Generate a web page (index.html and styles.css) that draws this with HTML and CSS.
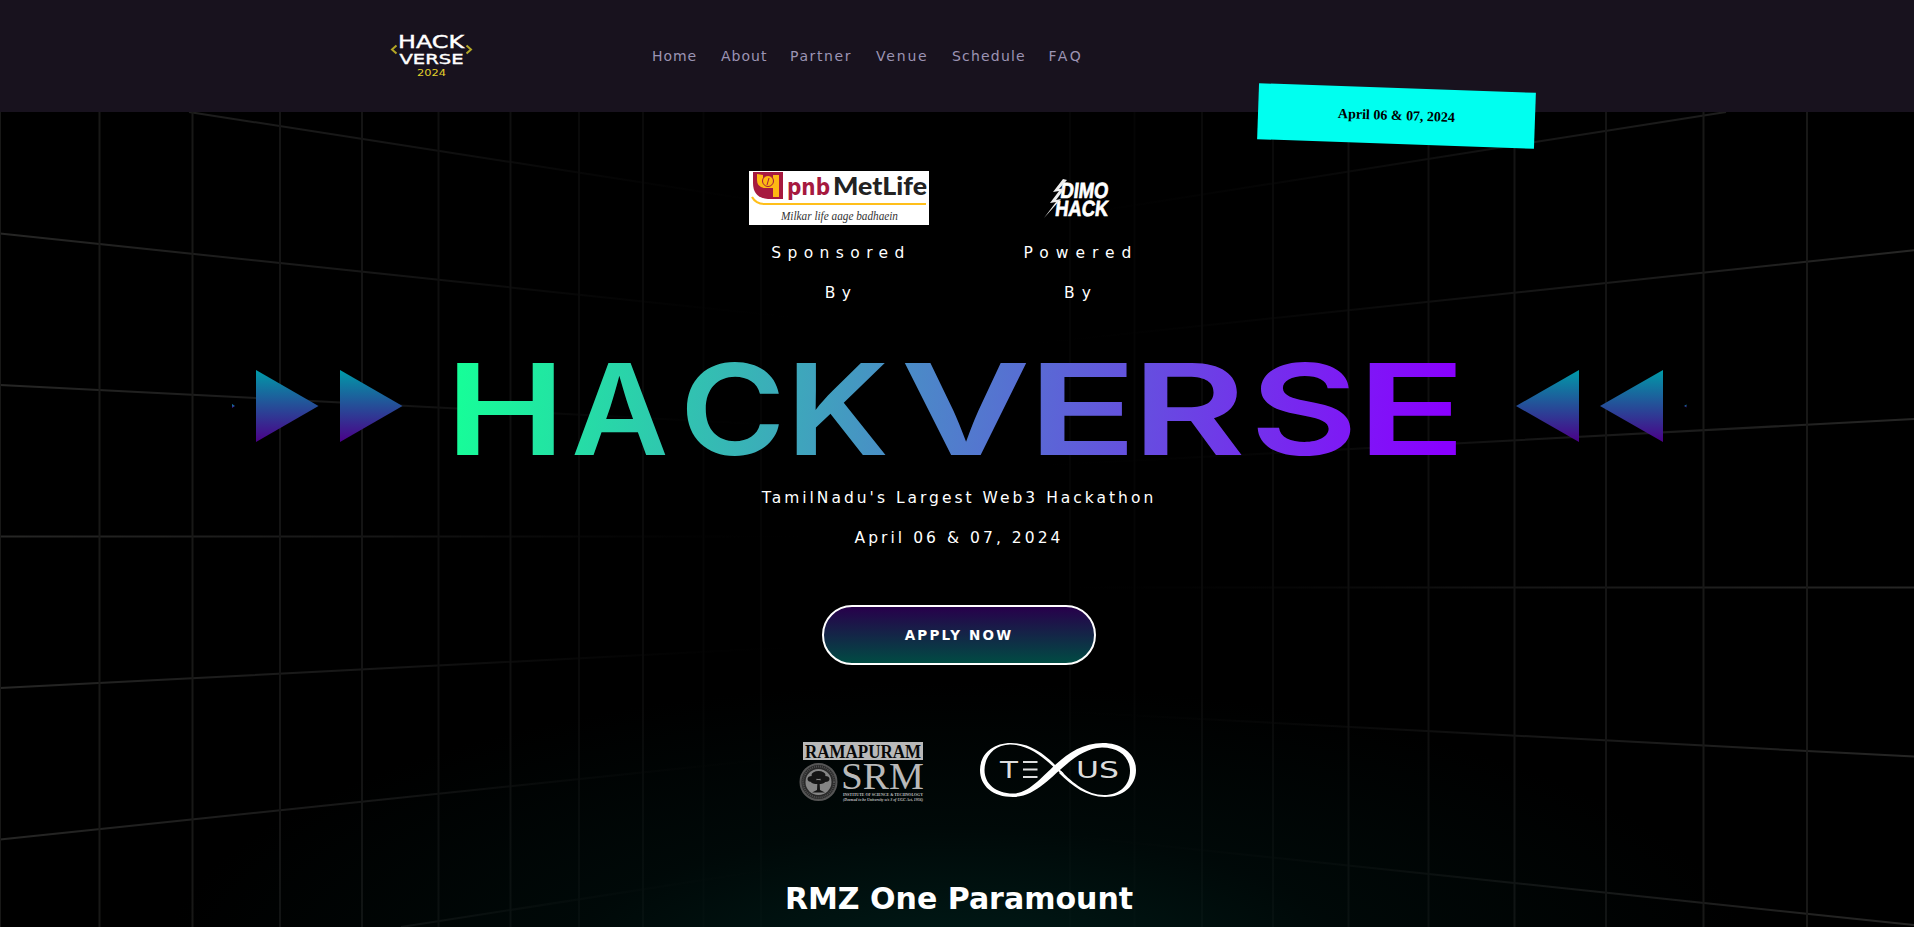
FILE: index.html
```html
<!DOCTYPE html>
<html lang="en">
<head>
<meta charset="utf-8">
<title>Hackverse 2024</title>
<link rel="stylesheet" href="styles.css">
</head>
<body>
<header class="header">
  <svg class="brand" width="84" height="48" viewBox="0 0 84 48" aria-label="Hackverse 2024">
    <g class="brand-word">
      <text x="8" y="15" font-size="17" textLength="66" lengthAdjust="spacingAndGlyphs">HACK</text>
      <text x="9.500" y="31" font-size="14" textLength="64" lengthAdjust="spacingAndGlyphs">VERSE</text>
    </g>
    <text class="brand-year" x="27" y="43" font-size="8" textLength="29" lengthAdjust="spacingAndGlyphs">2024</text>
    <path class="brand-mark" d="M6.500 12.500L2 16.500L6.500 20.500M76.500 12.500L81 16.500L76.500 20.500"/>
  </svg>
  <nav class="nav">
    <a class="n1">Home</a><a class="n2">About</a><a class="n3">Partner</a><a class="n4">Venue</a><a class="n5">Schedule</a><a class="n6">FAQ</a>
  </nav>
  <div class="date-tag">April 06 &amp; 07, 2024</div>
</header>

<main class="hero">
  <svg class="grid-lines" width="1914" height="815" viewBox="0 112 1914 815">
    <defs>
      <linearGradient id="fade" gradientUnits="userSpaceOnUse" x1="0" y1="0" x2="1914" y2="0">
        <stop offset="0" stop-color="#262625"/><stop offset=".2" stop-color="#161616"/><stop offset=".43" stop-color="#000" stop-opacity="0"/>
        <stop offset=".53" stop-color="#000" stop-opacity="0"/><stop offset=".8" stop-color="#161616"/><stop offset="1" stop-color="#262625"/>
      </linearGradient>
    </defs>
    <g fill="none" stroke="url(#fade)" stroke-width="2">
      <path d="M189 112L800 207M0 233.500L800 318M0 385L800 426M0 536.500L800 536.600M0 688L800 647M0 839.500L800 756M401 927L800 865"/>
      <path d="M1726 112L1060 217M1914 250.300L1030 344M1914 419L1030 466M1914 587.400L1030 587.500M1914 756.600L1030 710M1914 925L1030 832"/>
    </g>
    <g class="verticals">
      <path stroke="#181817" d="M0 112V927M99.500 112V927M192.500 112V927M1703.500 112V927M1807 112V927"/>
      <path stroke="#141414" d="M280 112V927M362 112V927M1514.500 112V927M1606 112V927"/>
      <path stroke="#0f0f0f" d="M438.500 112V927M510.500 112V927M1348.500 112V927M1428.500 112V927"/>
      <path stroke="#0a0a0a" d="M579 112V927M643 112V927M1202 112V927M1273 112V927"/>
      <path stroke="#050505" d="M703.500 112V927M761 112V927M1070 112V927M1134.500 112V927"/>
    </g>
  </svg>
  <div class="glow"></div>

  <div class="content">
    <section class="backers">
      <div class="backer">
        <svg width="180" height="54" viewBox="0 0 180 54">
          <rect width="180" height="54" fill="#fff"/>
          <path d="M4 1H34V28H19Q4 27 4 12Z" fill="#a6193f"/>
          <path d="M8 3V9Q8 17 17 17H24V26H30V4H24V12H14V4Z" fill="#fdb913"/>
          <circle cx="19" cy="10" r="5.500" fill="#fdb913" stroke="#a6193f"/>
          <path d="M18 14L20 7" stroke="#a6193f"/>
          <text class="pnb" x="38" y="24" textLength="43" lengthAdjust="spacingAndGlyphs">pnb</text>
          <text class="metlife" x="84" y="24" textLength="94" lengthAdjust="spacingAndGlyphs">MetLife</text>
          <path d="M3 26Q7 33 16 33H177" fill="none" stroke="#ffbf1a" stroke-width="2.200"/>
          <text class="script" x="32" y="49" textLength="117" lengthAdjust="spacingAndGlyphs">Milkar life aage badhaein</text>
        </svg>
        <p class="role">Sponsored<br>By</p>
      </div>
      <div class="backer">
        <svg width="180" height="54" viewBox="0 0 180 54">
          <g transform="translate(10 0)">
            <g class="dimo" transform="skewX(-7)">
              <text x="64" y="27" textLength="48" lengthAdjust="spacingAndGlyphs">DIMO</text>
              <text x="61" y="45" textLength="53" lengthAdjust="spacingAndGlyphs">HACK</text>
            </g>
            <path d="M64 8L54 21L60 20L51 32L57 31L45 47L62 28L57 29L66 17L60 18L68 9Z" fill="#eee"/>
          </g>
        </svg>
        <p class="role powered">Powered<br>By</p>
      </div>
    </section>

    <svg class="title" width="1480" height="110" viewBox="220 351 1480 110" role="heading">
      <defs>
        <linearGradient id="word" gradientUnits="userSpaceOnUse" x1="458" y1="345" x2="1440" y2="475">
          <stop offset="0" stop-color="#16ff98"/><stop offset="1" stop-color="#8900ff"/>
        </linearGradient>
        <linearGradient id="arrow" x1="0" y1="0" x2="0" y2="1">
          <stop offset="0" stop-color="#009ba8"/><stop offset="1" stop-color="#4b0088"/>
        </linearGradient>
      </defs>
      <g fill="url(#arrow)">
        <path d="M256 370L318.500 406L256 442Z"/><path d="M340 370L402.500 406L340 442Z"/><path d="M232 404L235 406L232 408Z"/>
        <path d="M1579 370L1516 406L1579 442Z"/><path d="M1663 370L1600 406L1663 442Z"/><path d="M1686.500 404.500L1684 406L1686.500 407.500Z"/>
      </g>
      <g class="word" fill="url(#word)">
        <text y="455"><tspan x="445.400" textLength="120" lengthAdjust="spacingAndGlyphs">H</tspan><tspan x="571.300" textLength="97.300" lengthAdjust="spacingAndGlyphs">A</tspan><tspan x="679.800" textLength="105.800" lengthAdjust="spacingAndGlyphs">C</tspan><tspan x="786" textLength="103.300" lengthAdjust="spacingAndGlyphs">K</tspan><tspan x="900.400" textLength="130" lengthAdjust="spacingAndGlyphs">V</tspan><tspan x="1027.500" textLength="109.800" lengthAdjust="spacingAndGlyphs">E</tspan><tspan x="1131.800" textLength="114" lengthAdjust="spacingAndGlyphs">R</tspan><tspan x="1250" textLength="108" lengthAdjust="spacingAndGlyphs">S</tspan><tspan x="1356.500" textLength="109.800" lengthAdjust="spacingAndGlyphs">E</tspan></text>
      </g>
    </svg>

    <p class="tagline"><span class="t1">TamilNadu's Largest Web3 Hackathon</span><br><span class="t2">April 06 &amp; 07, 2024</span></p>
    <button class="apply">APPLY NOW</button>

    <section class="hosts">
      <svg width="126" height="62" viewBox="798 742 126 62">
        <rect x="803" y="743" width="120" height="18" fill="#b9b9b9"/>
        <text class="rama" x="805" y="758.500" textLength="116" lengthAdjust="spacingAndGlyphs">RAMAPURAM</text>
        <text class="srm" x="841" y="789.500" textLength="83" lengthAdjust="spacingAndGlyphs">SRM</text>
        <text class="tiny" x="843" y="796.500" font-size="4.500" font-weight="700" textLength="80" lengthAdjust="spacingAndGlyphs">INSTITUTE OF SCIENCE &amp; TECHNOLOGY</text>
        <text class="tiny" x="843" y="801.800" font-size="4" font-weight="700" font-style="italic" textLength="80" lengthAdjust="spacingAndGlyphs">(Deemed to be University u/s 3 of UGC Act, 1956)</text>
        <circle cx="818.500" cy="783" r="18" fill="#292929" stroke="#555" stroke-width="2"/>
        <circle cx="818.500" cy="783" r="15.500" fill="none" stroke="#505050" stroke-width="2" stroke-dasharray="1 1"/>
        <circle cx="818.500" cy="783" r="13" fill="#858585"/>
        <g fill="#151515"><ellipse cx="818.500" cy="776" rx="7" ry="4"/><ellipse cx="812" cy="780" rx="4.500" ry="3"/><ellipse cx="825" cy="780" rx="4.500" ry="3"/><ellipse cx="818" cy="783" rx="7" ry="2"/><path d="M817.500 782H819.500L820 791L825 793.500H812L817 791Z"/></g>
      </svg>
      <svg width="160" height="62" viewBox="978 742 160 62">
        <path fill="#fff" d="M1058 769C1045 755 1030 744 1011 744C992 744 980 756 980 771C980 787 993 798 1013 798C1047 798 1066 750 1102 748.500C1119 748.500 1130 758 1130 772C1130 786 1120 796 1104 796C1087 796 1073 784 1061 772L1059 774C1072 787 1087 798 1105 798C1123 798 1136 787 1136 771C1136 755 1122 744 1103 744C1058 744 1041 794.500 1013 794.500C996 794.500 984.500 785 984.500 771C984.500 757 995 745.500 1010 745.500C1028 745.500 1042 757 1057 771Z"/>
        <path d="M1054 767L1063 775" stroke="#fff" stroke-width="2"/>
        <g class="texus"><text x="1000" y="779" textLength="18" lengthAdjust="spacingAndGlyphs">T</text><text x="1076" y="779" textLength="43" lengthAdjust="spacingAndGlyphs">US</text></g>
        <path d="M1023 763H1037.500M1023 770.500H1037.500M1023 778H1037.500" stroke="#ddd" stroke-width="2"/>
      </svg>
    </section>

    <h2 class="venue">RMZ One Paramount</h2>
  </div>
</main>
</body>
</html>
```

FILE: styles.css
```css
* { box-sizing: border-box; }
body {
  margin: 0;
  height: 927px;
  overflow: hidden;
  background: #000;
  color: #fff;
  font-family: "DejaVu Sans", sans-serif;
}
.header {
  position: relative;
  z-index: 2;
  display: flex;
  height: 112px;
  padding: 33px 0 0 390px;
  background: #18121e;
}
.brand { flex: none; overflow: visible; }
.brand-word { fill: #fff; font-family: "DejaVu Sans", sans-serif; font-weight: 400; stroke: #fff; stroke-width: .4px; }
.brand-year { fill: #e0cf2c; font-family: "DejaVu Sans", sans-serif; font-weight: 400; }
.brand-mark { fill: none; stroke: #b3a626; stroke-width: 2; }
.nav {
  display: grid;
  grid-template-columns: 69px 69px 86px 76px 96.5px 40px;
  margin: 13px 0 0 178px;
  height: 20px;
  line-height: 20px;
  font-size: 14px;
  color: #9c94b4;
}
.n1 { letter-spacing: .9px; }
.n2 { letter-spacing: 1px; }
.n3 { letter-spacing: 1.6px; }
.n4 { letter-spacing: 1.8px; }
.n5 { letter-spacing: 1.2px; }
.n6 { letter-spacing: 2.6px; }
.date-tag {
  position: absolute;
  left: 1258px;
  top: 88px;
  width: 277px;
  height: 56px;
  background: #00fff0;
  color: #000;
  font: 700 14px/56px "Liberation Serif", serif;
  text-align: center;
  transform: rotate(2deg);
}
.hero { position: relative; height: 815px; overflow: hidden; }
.grid-lines, .glow { position: absolute; left: 0; top: 0; }
.verticals { fill: none; stroke-width: 2; }
.glow {
  width: 100%;
  height: 100%;
  background: radial-gradient(ellipse 800px 290px at 957px 860px, rgba(0, 36, 32, .8), rgba(0, 22, 20, .4) 50%, transparent);
}
.content {
  position: relative;
  display: flex;
  flex-direction: column;
  align-items: center;
  padding-top: 59px;
}
.backers { display: flex; gap: 60px; height: 180px; margin-left: 4px; }
.backer { width: 180px; text-align: center; }
.backer svg { display: block; }
.role { margin: 8px -20px 0 -16px; font-size: 15.500px; line-height: 40px; letter-spacing: 6.400px; }
.powered { letter-spacing: 7px; }
.title { display: block; margin-left: 6px; overflow: visible; }
.pnb { fill: #a6193f; font: 700 23px "DejaVu Sans", sans-serif; }
.metlife { fill: #222; font: 900 24px Lato, sans-serif; }
.script { fill: #333; font: italic 12px "Liberation Serif", serif; }
.dimo { fill: #fff; font: 700 22px "Liberation Sans", sans-serif; stroke: #fff; stroke-width: .7px; }
.word { font: 600 126.500px Inter, sans-serif; }
.tagline { margin: 17px 0 0 4px; font-size: 15.500px; line-height: 40px; text-align: center; white-space: nowrap; }
.t1 { letter-spacing: 3px; }
.t2 { letter-spacing: 3.050px; }
.apply {
  width: 274px;
  height: 60px;
  margin: 47px 0 0 4px;
  border: 2px solid #fff;
  border-radius: 30px;
  background: linear-gradient(#27004b, #004b43);
  color: #fff;
  font: 700 13.500px "DejaVu Sans", sans-serif;
  letter-spacing: 2.200px;
}
.hosts { display: flex; gap: 54px; height: 62px; margin: 76px 0 0 22px; }
.hosts svg { overflow: visible; }
.rama { fill: #080808; font: 700 19px "Liberation Serif", serif; }
.srm { fill: #b9b9b9; font: 400 37px "Liberation Serif", serif; }
.tiny { fill: #c0c0c0; font-family: "Liberation Serif", serif; }
.texus { fill: #ddd; font: 400 23px "DejaVu Sans", sans-serif; }
.venue { margin: 77px 0 0 4px; font-size: 30px; line-height: 38px; font-weight: 700; white-space: nowrap; }
```
